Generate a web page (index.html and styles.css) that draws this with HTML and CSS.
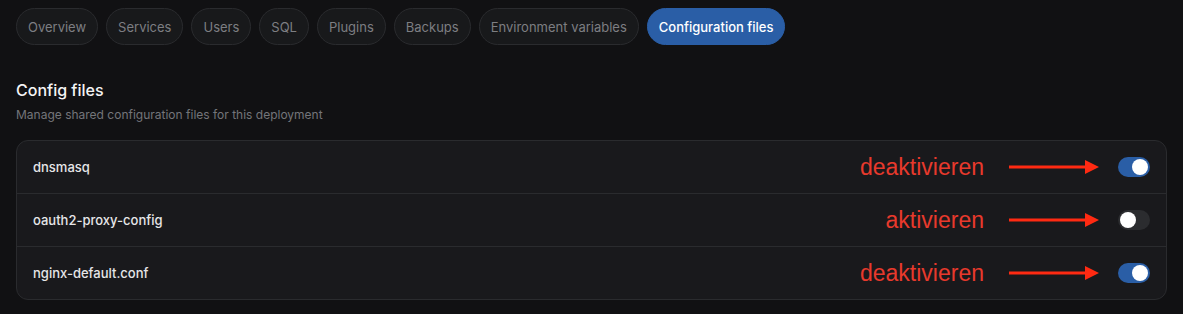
FILE: index.html
```html
<!DOCTYPE html>
<html lang="en">
<head>
  <meta charset="UTF-8">
  <title>Configuration files</title>
  <link rel="stylesheet" href="styles.css">
</head>
<body>
  <nav class="tabs">
    <button class="tab">Overview</button>
    <button class="tab">Services</button>
    <button class="tab">Users</button>
    <button class="tab">SQL</button>
    <button class="tab">Plugins</button>
    <button class="tab">Backups</button>
    <button class="tab">Environment variables</button>
    <button class="tab active">Configuration files</button>
  </nav>

  <section class="config">
    <h2>Config files</h2>
    <p class="subtitle">Manage shared configuration files for this deployment</p>

    <div class="card">
      <div class="row">
        <span class="name">dnsmasq</span>
        <span class="note">deaktivieren</span>
        <svg class="arrow" width="90" height="16" viewBox="0 0 90 16"><rect x="0" y="6.5" width="78" height="3" fill="#ff2a12"/><polygon points="76,1 90,8 76,15" fill="#ff2a12"/></svg>
        <span class="toggle on"><span class="knob"></span></span>
      </div>
      <div class="row">
        <span class="name">oauth2-proxy-config</span>
        <span class="note">aktivieren</span>
        <svg class="arrow" width="90" height="16" viewBox="0 0 90 16"><rect x="0" y="6.5" width="78" height="3" fill="#ff2a12"/><polygon points="76,1 90,8 76,15" fill="#ff2a12"/></svg>
        <span class="toggle"><span class="knob"></span></span>
      </div>
      <div class="row">
        <span class="name">nginx-default.conf</span>
        <span class="note">deaktivieren</span>
        <svg class="arrow" width="90" height="16" viewBox="0 0 90 16"><rect x="0" y="6.5" width="78" height="3" fill="#ff2a12"/><polygon points="76,1 90,8 76,15" fill="#ff2a12"/></svg>
        <span class="toggle on"><span class="knob"></span></span>
      </div>
    </div>
  </section>
</body>
</html>
```

FILE: styles.css
```css
body {
  margin: 0;
  padding: 8px 16px;
  background-color: #111113;
  font-family: 'Inter', 'Noto Sans', sans-serif;
  color: #ececee;
}

.tabs {
  display: flex;
  gap: 8px;
}

.tab {
  height: 37px;
  padding: 0 11px;
  font-family: inherit;
  font-size: 13px;
  color: #7d7e82;
  background-color: #18191b;
  border: 1px solid #2a2b2e;
  border-radius: 19px;
}

.tab.active {
  color: #ffffff;
  font-weight: 500;
  background-color: #2a5ea6;
  border-color: #2a5ea6;
}

.config h2 {
  margin: 33px 0 0;
  font-size: 16px;
  line-height: 24px;
  font-weight: 500;
  color: #f4f4f5;
}

.subtitle {
  margin: 5px 0 0;
  font-size: 12px;
  line-height: 16px;
  color: #74757a;
}

.card {
  margin-top: 17px;
  background-color: #19191c;
  border: 1px solid #2a2b2e;
  border-radius: 12px;
}

.row {
  display: flex;
  align-items: center;
  height: 52px;
  padding: 0 16px;
  border-top: 1px solid #2a2b2e;
}

.row:first-child {
  border-top: none;
}

.name {
  flex: 1;
  font-size: 13px;
  font-weight: 500;
  color: #e6e6e8;
}

/* red annotations */
.note {
  font-family: 'Liberation Sans', Arial, sans-serif;
  font-size: 23px;
  color: #e8392c;
  margin-right: 25px;
}

.arrow {
  display: block;
  margin-right: 19px;
}

.toggle {
  display: flex;
  align-items: center;
  width: 32px;
  height: 20px;
  padding: 0 2px;
  box-sizing: border-box;
  border-radius: 10px;
  background-color: #2b2c2f;
}

.toggle.on {
  justify-content: flex-end;
  background-color: #2a5ea6;
}

.knob {
  width: 16px;
  height: 16px;
  border-radius: 50%;
  background-color: #ffffff;
}
```
